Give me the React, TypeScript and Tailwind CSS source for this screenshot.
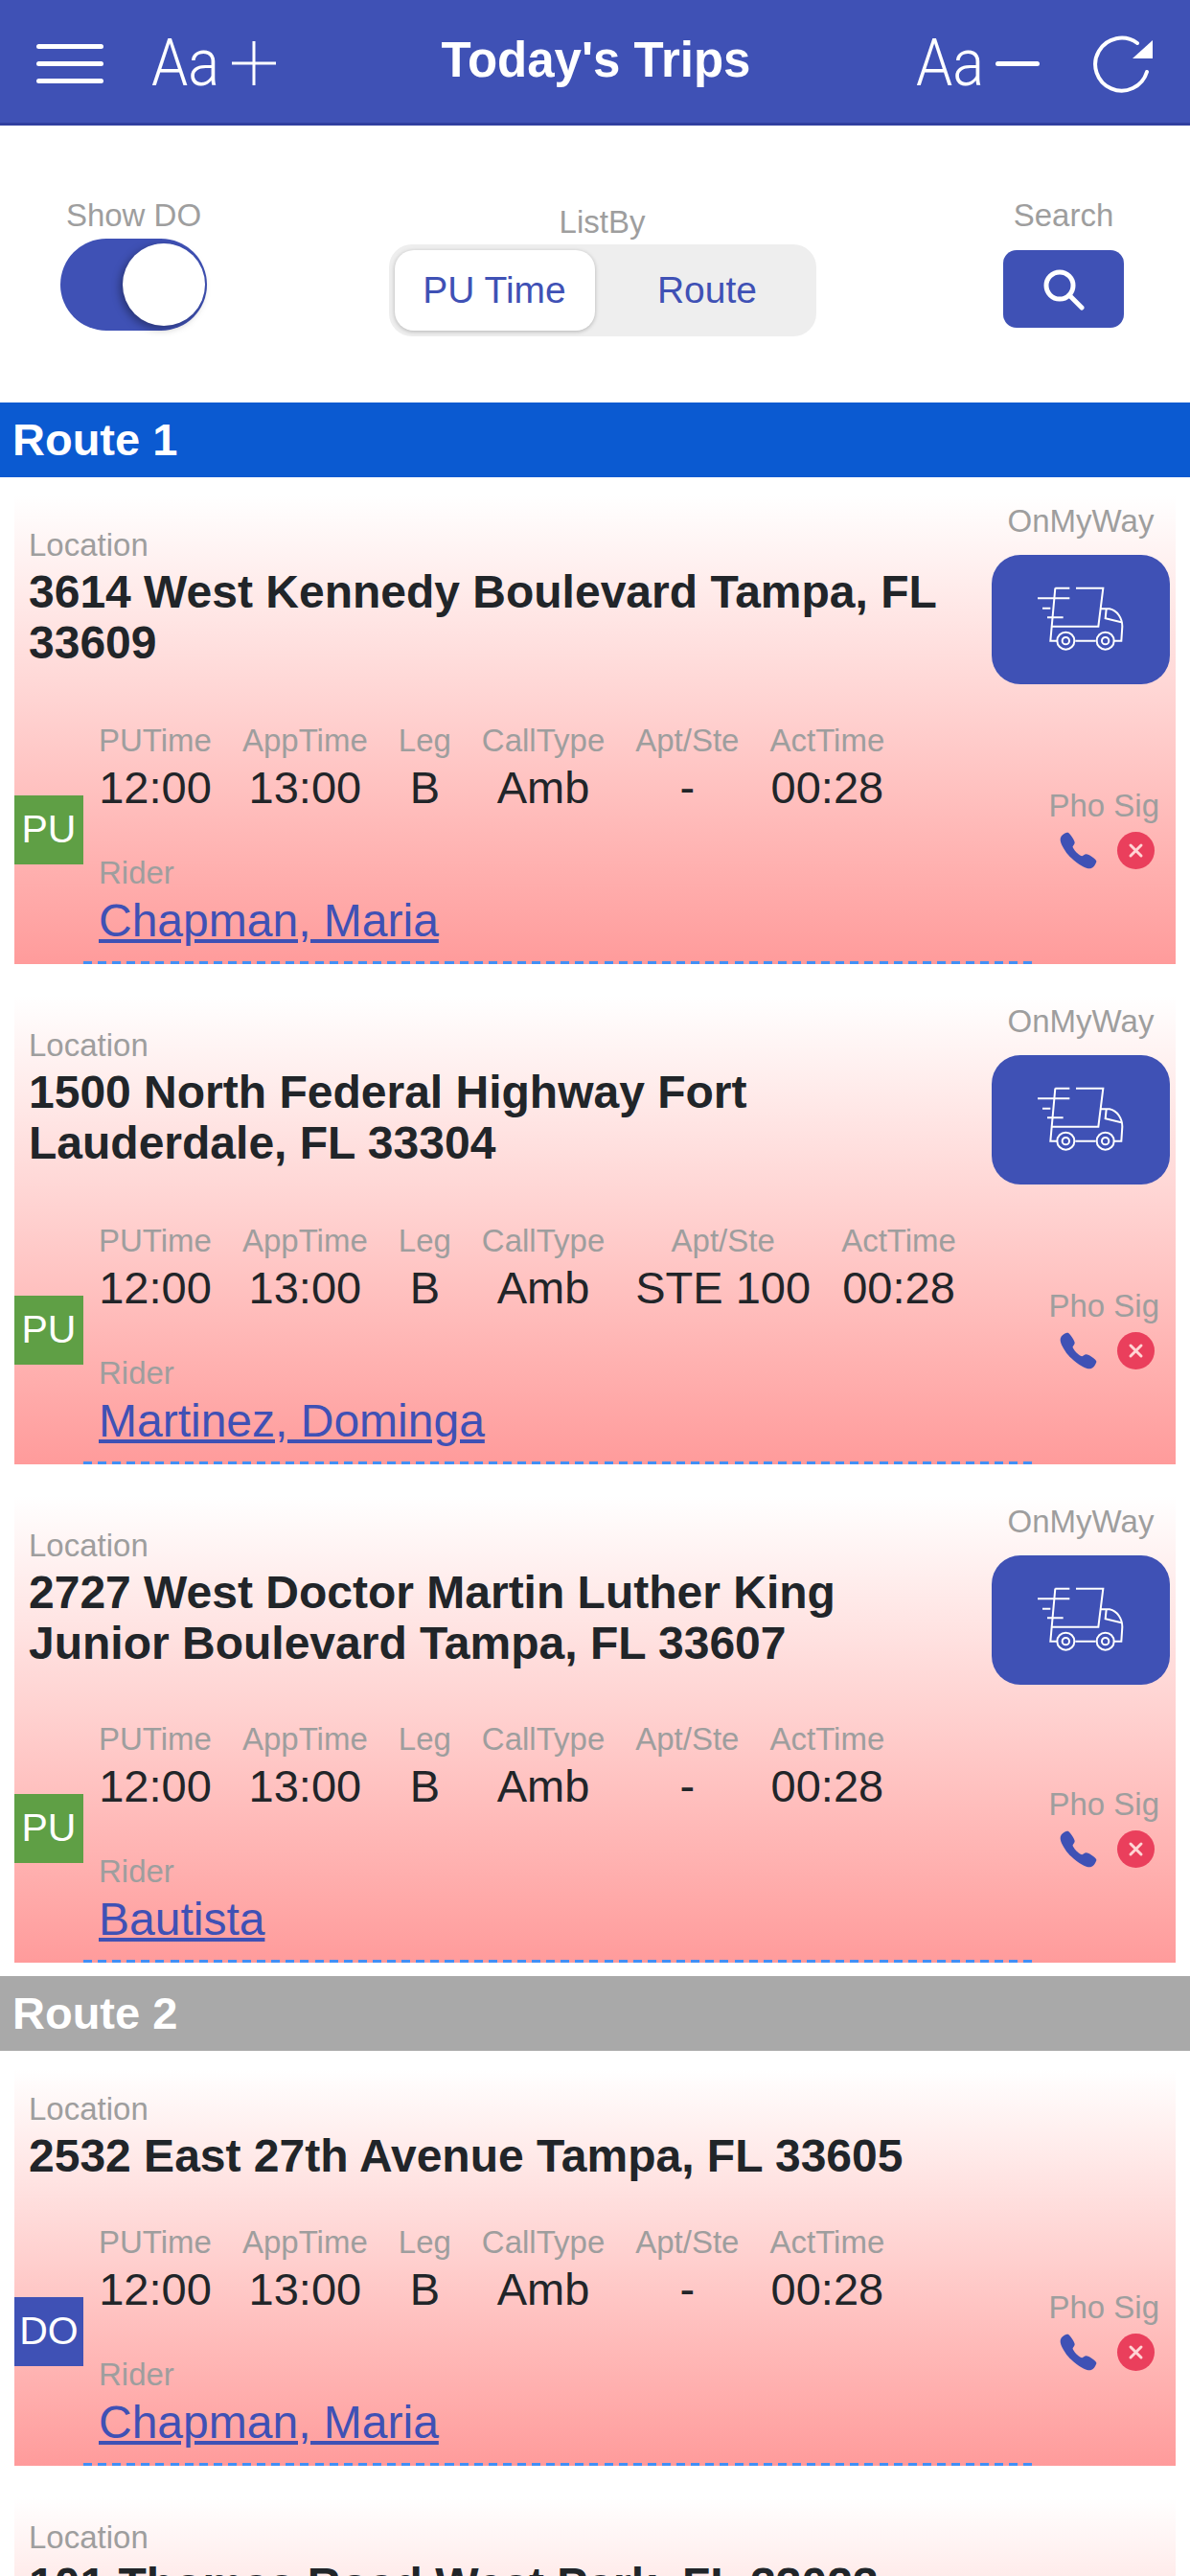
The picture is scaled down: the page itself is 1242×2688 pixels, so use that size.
import { IoCall } from 'react-icons/io5';

type Trip = {
  address: string[];
  apt: string;
  rider: string;
  kind: 'PU' | 'DO';
  onMyWay: boolean;
  compact?: boolean;
};

const cols = ['PUTime', 'AppTime', 'Leg', 'CallType', 'Apt/Ste', 'ActTime'];

function TruckIcon() {
  return (
    <svg width="90" height="70" viewBox="0 0 270 210" fill="none" stroke="white" strokeWidth="6">
      <path d="M55 5H100M120 5H205L190 125H45M55 5L40 170H60M118 170H182M240 170H262L265 125C265 100 250 75 225 70H197" />
      <path d="M215 70L212 100L262 112" />
      <path d="M0 37H100M15 68H40M30 97H80" />
      <circle cx="88" cy="170" r="27" />
      <circle cx="88" cy="170" r="11" />
      <circle cx="212" cy="170" r="27" />
      <circle cx="212" cy="170" r="11" />
    </svg>
  );
}

function TripCard({ trip }: { trip: Trip }) {
  const topPad = !trip.onMyWay ? 'pt-[23px] pb-[17px]' : trip.compact ? 'pt-[8px] pb-[10px]' : 'pt-[8px] pb-[12px]';
  return (
    <div className="mx-[15px] mt-[19px] mb-[14px] bg-gradient-to-b from-white to-[#ff9b9b] flex flex-col">
      <div className={`flex items-center ${topPad}`}>
        <div className={`flex-1 pl-[15px] ${trip.onMyWay ? 'pt-[8px]' : ''}`}>
          <div className="text-[33px] leading-[38px] text-[#9e9e9e]">Location</div>
          <div className="text-[48px] leading-[53px] font-bold text-[#212529] mt-[3px]">
            {trip.address.map((line) => (
              <div key={line}>{line}</div>
            ))}
          </div>
        </div>
        {trip.onMyWay && (
          <div className="w-[186px] mr-[6px] flex flex-col items-center">
            <div className="text-[33px] leading-[38px] text-[#9e9e9e]">OnMyWay</div>
            <div className="mt-[16px] w-[186px] h-[135px] rounded-[30px] bg-[#3f51b5] flex items-center justify-center">
              <TruckIcon />
            </div>
          </div>
        )}
      </div>
      <div className="flex items-center">
        <div className={`w-[72px] h-[72px] shrink-0 flex items-center justify-center text-white text-[41px] ${trip.kind === 'PU' ? 'bg-[#5f9f45]' : 'bg-[#3f51b5]'}`}>
          {trip.kind}
        </div>
        <div className="w-[990px] h-[280px] pt-[28px] flex flex-col">
          <div className="pl-[16px] flex gap-[32px]">
            {cols.map((c, i) => (
              <div key={c} className="flex flex-col items-center">
                <div className="text-[33px] leading-[38px] text-[#9e9e9e]">{c}</div>
                <div className="text-[47px] leading-[54px] text-[#212529] mt-[3px]">
                  {['12:00', '13:00', 'B', 'Amb', trip.apt, '00:28'][i]}
                </div>
              </div>
            ))}
          </div>
          <div className="pl-[16px] text-[33px] leading-[38px] text-[#9e9e9e] mt-[43px]">Rider</div>
          <a className="pl-[16px] block text-[48px] leading-[54px] text-[#3f51b5] underline mt-[4px]">{trip.rider}</a>
          <div className="mt-auto h-[3px] bg-[repeating-linear-gradient(90deg,#418ff5_0_9px,transparent_9px_15.1px)]" />
        </div>
        <div className="flex-1 flex flex-col items-end pr-[17px] -mt-[2px]">
          <div className="text-[33px] leading-[38px] text-[#9e9e9e]">Pho Sig</div>
          <div className="flex items-center gap-[19px] pr-[5px] mt-[6px]">
            <IoCall className="w-[43px] h-[43px] text-[#3f51b5]" />
            <div className="w-[39px] h-[39px] rounded-full bg-[#ea3f5c] flex items-center justify-center">
              <svg width="17" height="17" viewBox="0 0 17 17" stroke="#ffd5d5" strokeWidth="3" strokeLinecap="round">
                <path d="M3 3L14 14M14 3L3 14" />
              </svg>
            </div>
          </div>
        </div>
      </div>
    </div>
  );
}

const route1: Trip[] = [
  { address: ['3614 West Kennedy Boulevard Tampa, FL', '33609'], apt: '-', rider: 'Chapman, Maria', kind: 'PU', onMyWay: true },
  { address: ['1500 North Federal Highway Fort', 'Lauderdale, FL 33304'], apt: 'STE 100', rider: 'Martinez, Dominga', kind: 'PU', onMyWay: true },
  { address: ['2727 West Doctor Martin Luther King', 'Junior Boulevard Tampa, FL 33607'], apt: '-', rider: 'Bautista', kind: 'PU', onMyWay: true, compact: true },
];

const route2: Trip[] = [
  { address: ['2532 East 27th Avenue Tampa, FL 33605'], apt: '-', rider: 'Chapman, Maria', kind: 'DO', onMyWay: false },
  { address: ['101 Thomas Road West Park, FL 33023'], apt: '-', rider: 'Chapman, Maria', kind: 'DO', onMyWay: false },
];

export default function App() {
  return (
    <div className="h-[2688px] overflow-hidden bg-white flex flex-col font-['Liberation_Sans',Arial,sans-serif]">
      <header className="h-[131px] shrink-0 bg-[#3f51b5] border-b-[3px] border-[#303f9f] flex items-center justify-between pl-[38px] pr-[36px]">
        <div className="flex items-center mt-[4px]">
          <div className="w-[70px] flex flex-col gap-[13px]">
            <div className="h-[5px] bg-white rounded-full" />
            <div className="h-[5px] bg-white rounded-full" />
            <div className="h-[5px] bg-white rounded-full" />
          </div>
          <span className="ml-[50px] w-[69px] text-white text-[68px] leading-none font-['Roboto',sans-serif] font-light scale-x-[0.9] origin-left">Aa</span>
          <svg className="ml-[15px]" width="46" height="46" viewBox="0 0 46 46" stroke="white" strokeWidth="3">
            <path d="M0 23H46M23 0V46" />
          </svg>
        </div>
        <h1 className="text-white text-[51px] font-bold leading-none mb-[4px]">Today's Trips</h1>
        <div className="flex items-center mt-[4px]">
          <span className="w-[69px] text-white text-[68px] leading-none font-['Roboto',sans-serif] font-light scale-x-[0.9] origin-left">Aa</span>
          <div className="ml-[14px] w-[46px] h-[5px] bg-white rounded-full" />
          <svg className="ml-[55px]" width="66" height="62" viewBox="0 0 66 62" fill="none">
            <path d="M47 10A27.5 27.5 0 1 0 57 40" stroke="white" strokeWidth="4" strokeLinecap="round" />
            <path d="M63 7V26H42Z" fill="white" />
          </svg>
        </div>
      </header>

      <div className="h-[289px] shrink-0 flex justify-between pl-[63px] pr-[69px] pt-[75px]">
        <div className="w-[153px] flex flex-col items-center">
          <div className="text-[33px] leading-[38px] text-[#9e9e9e]">Show DO</div>
          <div className="mt-[5px] w-[153px] h-[96px] rounded-full bg-[#3f51b5] relative">
            <div className="absolute right-[2px] top-[5px] w-[86px] h-[86px] rounded-full bg-white shadow-[-3px_3px_8px_rgba(0,0,0,0.35)]" />
          </div>
        </div>
        <div className="mt-[7px] mr-[6px] flex flex-col items-center">
          <div className="text-[33px] leading-[38px] text-[#9e9e9e]">ListBy</div>
          <div className="mt-[4px] w-[446px] h-[96px] rounded-[24px] bg-[#eeeeee] p-[6px] flex items-stretch text-[39px] text-[#3f51b5]">
            <div className="w-[209px] rounded-[20px] bg-white shadow-[0_1px_4px_rgba(0,0,0,0.25)] flex items-center justify-center">PU Time</div>
            <div className="flex-1 flex items-center justify-center pl-[10px]">Route</div>
          </div>
        </div>
        <div className="w-[126px] flex flex-col items-center">
          <div className="text-[33px] leading-[38px] text-[#9e9e9e]">Search</div>
          <div className="mt-[17px] w-[126px] h-[81px] rounded-[14px] bg-[#3f51b5] flex items-center justify-center">
            <svg width="44" height="44" viewBox="0 0 44 44" fill="none" stroke="white" strokeWidth="5" strokeLinecap="round">
              <circle cx="18" cy="18" r="14" />
              <path d="M28 28L41 41" />
            </svg>
          </div>
        </div>
      </div>

      <div className="h-[78px] shrink-0 bg-[#0b5ad1] flex items-center px-[13px] text-white text-[47px] font-bold">Route 1</div>
      {route1.map((t) => (
        <TripCard key={t.address[0]} trip={t} />
      ))}
      <div className="h-[78px] shrink-0 bg-[#a9a9a9] flex items-center px-[13px] text-white text-[47px] font-bold">Route 2</div>
      {route2.map((t) => (
        <TripCard key={t.address[0]} trip={t} />
      ))}
    </div>
  );
}
